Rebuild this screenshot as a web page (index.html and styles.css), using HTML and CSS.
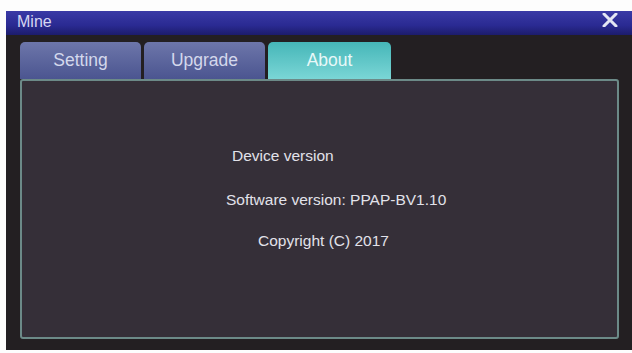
FILE: index.html
```html
<!DOCTYPE html>
<html lang="en">
<head>
    <meta charset="UTF-8">
    <title>Mine</title>
    <link rel="stylesheet" href="styles.css">
</head>
<body>
    <div class="window">
        <div class="title-bar">
            <span class="title">Mine</span>
            <svg class="close" width="16" height="14" viewBox="0 0 16 14">
                <path d="M2 1 L14 13 M14 1 L2 13" stroke="#e4e6f4" stroke-width="3" stroke-linecap="round"/>
            </svg>
        </div>
        <div class="content">
            <div class="tab-buttons">
                <div class="tab-button">Setting</div>
                <div class="tab-button">Upgrade</div>
                <div class="tab-button active">About</div>
            </div>
            <div class="panel">
                <div class="line line-device">Device version</div>
                <div class="line line-software">Software version: PPAP-BV1.10</div>
                <div class="line line-copyright">Copyright (C) 2017</div>
            </div>
        </div>
    </div>
</body>
</html>
```

FILE: styles.css
```css
body {
    margin: 0;
    background-color: #fdfdfd;
    font-family: 'Liberation Sans', Arial, sans-serif;
}

.window {
    margin: 11px 0 0 6px;
    width: 626px;
    height: 339px;
    background-color: #231f22;
}

.title-bar {
    height: 24px;
    display: flex;
    align-items: center;
    justify-content: space-between;
    padding: 0 14px 0 11px;
    background: linear-gradient(#3a3aa6, #2a2a92 60%, #1c1c6c);
}

.title {
    color: #d6d6f2;
    font-size: 16px;
    margin-top: -3px;
}

.close {
    margin-top: -6px;
}

.content {
    padding: 7px 13px 11px 14px;
}

.tab-buttons {
    display: flex;
    gap: 3px;
    height: 37px;
}

.tab-button {
    width: 121px;
    border-radius: 5px 5px 0 0;
    background: linear-gradient(#6d76aa, #4b5590);
    color: #d4d8ec;
    font-size: 17.5px;
    text-align: center;
    line-height: 36px;
}

.tab-button.active {
    width: 123px;
    background: linear-gradient(#46b6b8, #7ad6d6);
    color: #e8f8f8;
}

.panel {
    height: 260px;
    border: 2px solid #6c8a88;
    border-radius: 3px;
    background-color: #352f38;
    color: #e2e2ea;
    font-size: 15.5px;
    padding-top: 66px;
    box-sizing: border-box;
    width: 599px;
}

.line {
    height: 16px;
}

.line-device {
    margin-left: 210px;
}

.line-software {
    margin-left: 204px;
    margin-top: 28px;
}

.line-copyright {
    margin-left: 236px;
    margin-top: 25px;
}
```
